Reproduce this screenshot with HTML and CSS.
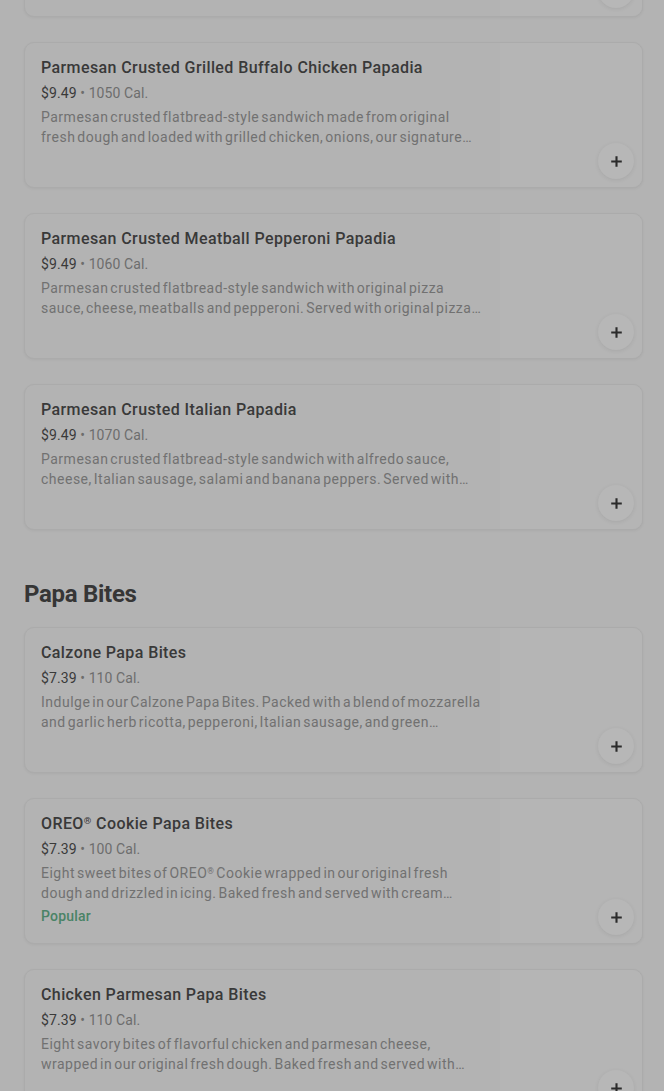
FILE: index.html
```html
<!DOCTYPE html>
<html lang="en">
<head>
<meta charset="utf-8">
<title>Menu</title>
<link rel="stylesheet" href="styles.css">
</head>
<body>
<main class="menu">
  <section class="section first">
    <div class="list">
      <article class="card">
        <div class="info">
          <h3 class="name">Parmesan Crusted Papadia</h3>
          <p class="meta"><span class="price">$9.49</span> • 1040 Cal.</p>
          <p class="desc">Parmesan crusted flatbread-style sandwich made from original fresh dough and loaded with toppings.</p>
        </div>
        <div class="thumb"><button class="add" aria-label="Add"><svg viewBox="0 0 16 16" width="13" height="13"><path d="M8 1.5v13M1.5 8h13" stroke="#2b2b2b" stroke-width="2.6"/></svg></button></div>
      </article>
      <article class="card">
        <div class="info">
          <h3 class="name">Parmesan Crusted Grilled Buffalo Chicken Papadia</h3>
          <p class="meta"><span class="price">$9.49</span> • 1050 Cal.</p>
          <p class="desc">Parmesan crusted flatbread-style sandwich made from original fresh dough and loaded with grilled chicken, onions, our signature buffalo sauce and cheese. Served with ranch.</p>
        </div>
        <div class="thumb"><button class="add" aria-label="Add"><svg viewBox="0 0 16 16" width="13" height="13"><path d="M8 1.5v13M1.5 8h13" stroke="#2b2b2b" stroke-width="2.6"/></svg></button></div>
      </article>
      <article class="card">
        <div class="info">
          <h3 class="name">Parmesan Crusted Meatball Pepperoni Papadia</h3>
          <p class="meta"><span class="price">$9.49</span> • 1060 Cal.</p>
          <p class="desc">Parmesan crusted flatbread-style sandwich with original pizza sauce, cheese, meatballs and pepperoni. Served with original pizza sauce for dipping.</p>
        </div>
        <div class="thumb"><button class="add" aria-label="Add"><svg viewBox="0 0 16 16" width="13" height="13"><path d="M8 1.5v13M1.5 8h13" stroke="#2b2b2b" stroke-width="2.6"/></svg></button></div>
      </article>
      <article class="card">
        <div class="info">
          <h3 class="name">Parmesan Crusted Italian Papadia</h3>
          <p class="meta"><span class="price">$9.49</span> • 1070 Cal.</p>
          <p class="desc">Parmesan crusted flatbread-style sandwich with alfredo sauce, cheese, Italian sausage, salami and banana peppers. Served with pizza sauce for dipping.</p>
        </div>
        <div class="thumb"><button class="add" aria-label="Add"><svg viewBox="0 0 16 16" width="13" height="13"><path d="M8 1.5v13M1.5 8h13" stroke="#2b2b2b" stroke-width="2.6"/></svg></button></div>
      </article>
    </div>
  </section>

  <section class="section">
    <h2 class="heading">Papa Bites</h2>
    <div class="list">
      <article class="card">
        <div class="info">
          <h3 class="name">Calzone Papa Bites</h3>
          <p class="meta"><span class="price">$7.39</span> • 110 Cal.</p>
          <p class="desc">Indulge in our Calzone Papa Bites. Packed with a blend of mozzarella and garlic herb ricotta, pepperoni, Italian sausage, and green peppers. Served with pizza sauce.</p>
        </div>
        <div class="thumb"><button class="add" aria-label="Add"><svg viewBox="0 0 16 16" width="13" height="13"><path d="M8 1.5v13M1.5 8h13" stroke="#2b2b2b" stroke-width="2.6"/></svg></button></div>
      </article>
      <article class="card">
        <div class="info">
          <h3 class="name">OREO<span class="reg">®</span> Cookie Papa Bites</h3>
          <p class="meta"><span class="price">$7.39</span> • 100 Cal.</p>
          <p class="desc">Eight sweet bites of OREO<span class="reg">®</span> Cookie wrapped in our original fresh dough and drizzled in icing. Baked fresh and served with cream cheese icing for dipping.</p>
          <p class="tag">Popular</p>
        </div>
        <div class="thumb"><button class="add" aria-label="Add"><svg viewBox="0 0 16 16" width="13" height="13"><path d="M8 1.5v13M1.5 8h13" stroke="#2b2b2b" stroke-width="2.6"/></svg></button></div>
      </article>
      <article class="card">
        <div class="info">
          <h3 class="name">Chicken Parmesan Papa Bites</h3>
          <p class="meta"><span class="price">$7.39</span> • 110 Cal.</p>
          <p class="desc">Eight savory bites of flavorful chicken and parmesan cheese, wrapped in our original fresh dough. Baked fresh and served with marinara for dipping.</p>
        </div>
        <div class="thumb"><button class="add" aria-label="Add"><svg viewBox="0 0 16 16" width="13" height="13"><path d="M8 1.5v13M1.5 8h13" stroke="#2b2b2b" stroke-width="2.6"/></svg></button></div>
      </article>
    </div>
  </section>
</main>
</body>
</html>
```

FILE: styles.css
```css
* { box-sizing: border-box; }
html, body {
  margin: 0;
  padding: 0;
  background: #b3b3b3;
  overflow: hidden;
}
body {
  font-family: Roboto, "Liberation Sans", Arial, sans-serif;
  color: #383838;
}
.menu {
  padding: 0 21px 0 24px;
}
.section.first {
  margin-top: -129px;
}
.list {
  display: flex;
  flex-direction: column;
  gap: 25px;
}
.heading {
  margin: 48px 0 17px;
  font-size: 24px;
  line-height: 32px;
  font-weight: 700;
  color: #363636;
  letter-spacing: -0.3px;
}
.card {
  display: flex;
  height: 146px;
  border: 1px solid #ababab;
  border-radius: 10px;
  background: #b3b3b3;
  box-shadow: 0 1px 3px rgba(0,0,0,0.05);
  overflow: hidden;
}
.info {
  flex: 1;
  min-width: 0;
  padding: 13px 18px 0 16px;
}
.name {
  margin: 0;
  font-size: 16px;
  line-height: 24px;
  font-weight: 500;
  color: #393939;
  letter-spacing: 0.4px;
}
.reg {
  font-size: 0.6em;
  vertical-align: 0.5em;
  line-height: 0;
}
.meta {
  margin: 3px 0 0;
  font-size: 14px;
  line-height: 20px;
  color: #6d6d6d;
  letter-spacing: 0.1px;
}
.price {
  color: #3a3a3a;
}
.desc {
  margin: 4px 0 0;
  font-size: 14px;
  line-height: 20px;
  color: #717171;
  letter-spacing: 0.5px;
  word-spacing: -2px;
  display: -webkit-box;
  -webkit-line-clamp: 2;
  -webkit-box-orient: vertical;
  overflow: hidden;
}
.tag {
  margin: 3px 0 0;
  font-size: 14px;
  line-height: 20px;
  font-weight: 500;
  color: #4a8366;
  letter-spacing: 0.2px;
}
.thumb {
  position: relative;
  width: 142px;
  flex: none;
  background: #b5b5b5;
}
.add {
  position: absolute;
  right: 8px;
  bottom: 8px;
  width: 36px;
  height: 36px;
  border-radius: 50%;
  border: none;
  padding: 0;
  background: #b7b7b7;
  box-shadow: 0 1px 4px rgba(0,0,0,0.08);
  display: flex;
  align-items: center;
  justify-content: center;
}
```
